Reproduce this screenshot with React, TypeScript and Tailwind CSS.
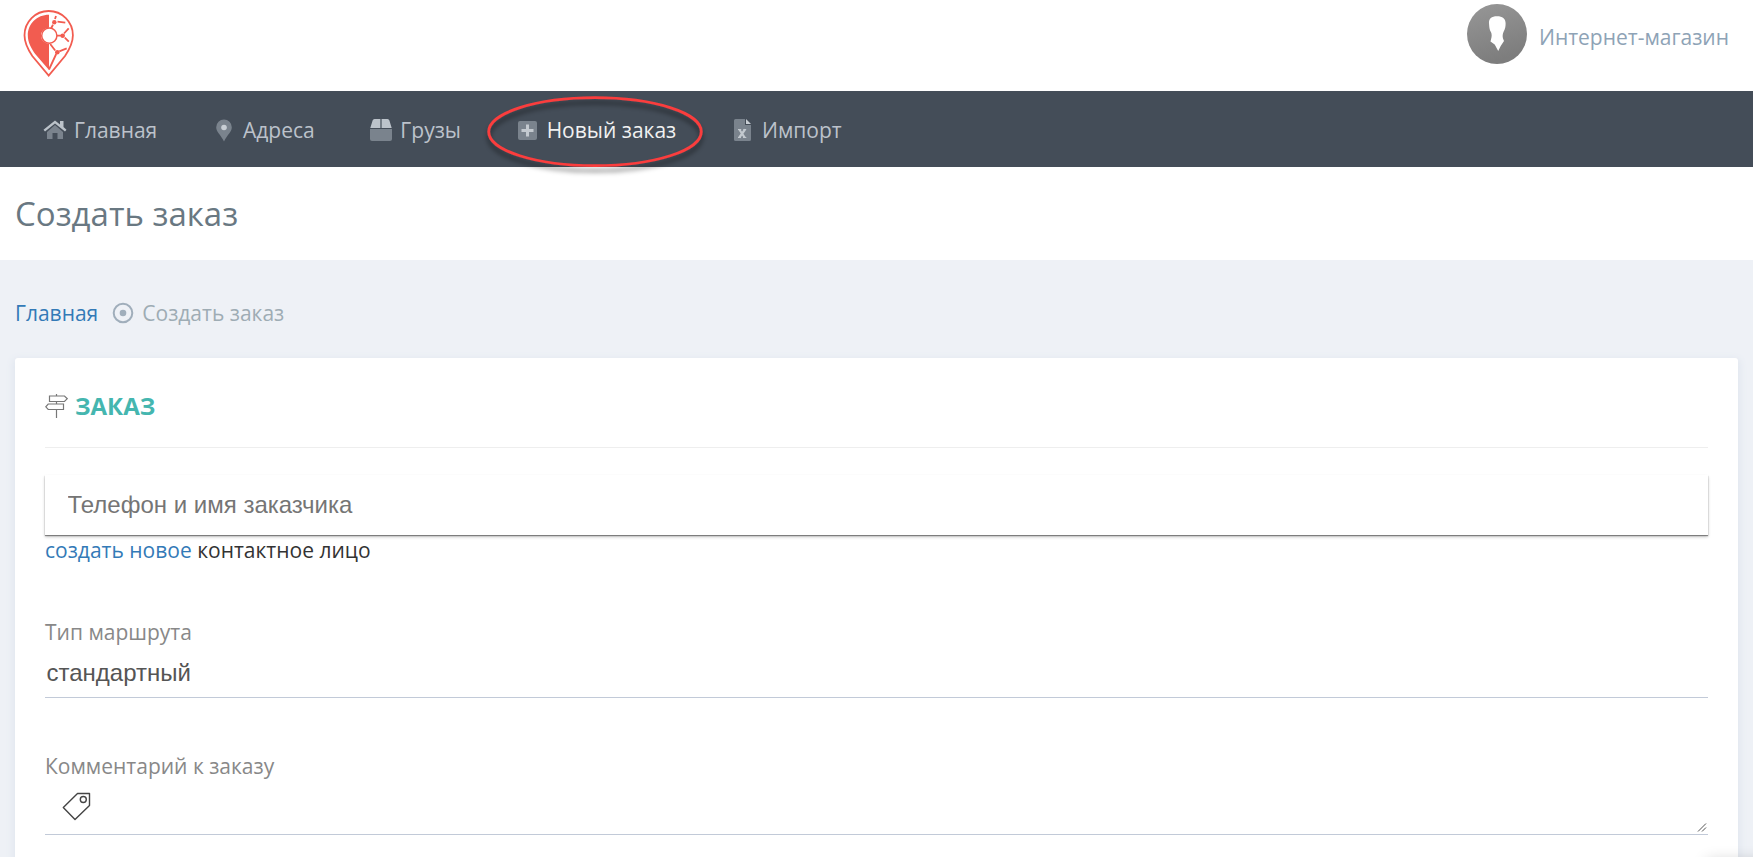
import type { ReactNode } from "react";

function Logo() {
  return (
    <svg width="52" height="68" viewBox="0 0 52 68" fill="none">
      <path
        d="M25.700 1C12.300 1 1.500 11.800 1.500 25.300c0 8 3.400 14.200 7.800 20.700L25.700 65.500 42 46c4.400-6.500 7.900-12.700 7.900-20.700C49.900 11.800 39.100 1 25.700 1Z"
        stroke="#f25c50"
        strokeWidth="1.800"
      />
      <path
        d="M26 4.800C13.800 4.800 4.800 14 4.800 25.300c0 7.500 3.600 13.200 7.400 18.700L26 60V33.700a8 8 0 0 1 0-16Z"
        fill="#f25c50"
      />
      <circle cx="26.300" cy="25.700" r="7.600" stroke="#f25c50" strokeWidth="1.500" fill="#fff" />
      <path
        d="M33 6l-1 3M34.500 11.600l7.800 1M30 14.800l-2 3.700M34 25.700h4M41 23.500l4.700-5.200M41.800 27.700l4 4M27.200 34l5 6.500M36.300 41.300l7.400-3M33.200 44L26 59.500"
        stroke="#f25c50"
        strokeWidth="1.800"
      />
      <g fill="#f25c50">
        <circle cx="31.300" cy="12.300" r="2.200" />
        <circle cx="39.700" cy="25.800" r="2.300" />
        <circle cx="34.300" cy="42.200" r="2.300" />
      </g>
    </svg>
  );
}

function HomeIcon() {
  return (
    <svg width="24" height="20" viewBox="0 0 24 20">
      <path d="M12 5l8 7v7h-5.500v-6h-5v6H4v-7Z" fill="#7a838d" />
      <path d="M17 1h3.500v6l3 2.800-1.500 1.800L12 3.500 2 11.600.5 9.800 12 .5l5 4Z" fill="#bcc3ca" />
    </svg>
  );
}

function PinIcon() {
  return (
    <svg width="16" height="23" viewBox="0 0 16 23">
      <path d="M8 .5a7.800 7.800 0 0 0-7.800 7.800C.2 13 4.500 15.500 8 22.500c3.500-7 7.800-9.500 7.800-14.200A7.800 7.800 0 0 0 8 .5Z" fill="#7a838d" />
      <circle cx="8" cy="8.500" r="2.800" fill="#c8ced4" />
    </svg>
  );
}

function BoxIcon() {
  return (
    <svg width="22" height="22" viewBox="0 0 22 22">
      <path d="M0 10h22v10a2 2 0 0 1-2 2H2a2 2 0 0 1-2-2Z" fill="#7a838d" />
      <path d="M10.400 0v9H.3L2.600 1.500A2 2 0 0 1 4.500 0ZM11.600 0v9h10.100l-2.300-7.500A2 2 0 0 0 17.500 0Z" fill="#bcc3ca" />
    </svg>
  );
}

function PlusIcon() {
  return (
    <svg width="19" height="19" viewBox="0 0 19 19">
      <rect width="19" height="19" rx="2" fill="#7a838d" />
      <path d="M8 3.500h3V8h4.500v3H11v4.500H8V11H3.500V8H8Z" fill="#c3c9cf" />
    </svg>
  );
}

function ExcelIcon() {
  return (
    <svg width="17" height="22" viewBox="0 0 17 22">
      <path d="M1.500 0H11v6h6v14.500a1.500 1.500 0 0 1-1.500 1.500h-14A1.500 1.500 0 0 1 0 20.500v-19A1.500 1.500 0 0 1 1.500 0Z" fill="#7a838d" />
      <path d="M12 0l5 5h-5Z" fill="#c8ced4" />
      <path d="M5.300 10.500l5.400 8M11 10.500l-5.700 8" stroke="#c3c9cf" strokeWidth="2.200" />
      <path d="M4 10.500h3.200M9.300 10.500h2.900M4 18.500h2.900M9 18.500h3.300" stroke="#c3c9cf" strokeWidth="1.200" />
    </svg>
  );
}

const navItems: { label: string; icon: ReactNode; active?: boolean }[] = [
  { label: "Главная", icon: <HomeIcon /> },
  { label: "Адреса", icon: <PinIcon /> },
  { label: "Грузы", icon: <BoxIcon /> },
  { label: "Новый заказ", icon: <PlusIcon />, active: true },
  { label: "Импорт", icon: <ExcelIcon /> },
];

export default function App() {
  return (
    <div className="h-[857px] flex flex-col overflow-hidden relative bg-[#eef1f6] text-[21px] leading-[30px] font-['Open_Sans',sans-serif]">
      {/* Top bar */}
      <header className="h-[91px] shrink-0 bg-white flex items-start justify-between pl-[23px] pr-6">
        <div className="pt-[10px]">
          <Logo />
        </div>
        <div className="flex items-center gap-3 pt-1">
          <svg width="60" height="60" viewBox="0 0 60 60">
            <defs>
              <linearGradient id="avatar" x1="0" y1="0" x2="0.3" y2="1">
                <stop offset="0" stopColor="#979797" />
                <stop offset="1" stopColor="#7d7d7d" />
              </linearGradient>
            </defs>
            <circle cx="30" cy="30" r="30" fill="url(#avatar)" />
            <path
              d="M30 12.200c-5.500 0-8.300 2.500-8 7 .2 3 .3 5 1.200 7.500 1.300 2 1.800 4 1.300 6.500l-1 4.300 4.200 3 3.500 6.500 2.500-5 3.300-5-1-2.500c-.6-2.500-.4-4.500.7-7 1.500-2.500 2-5.500 1.900-8.500-.2-4.500-3-6.800-8.600-6.800Z"
              fill="#fff"
            />
          </svg>
          <span className="text-[#8ea3b6] pt-[5px]">Интернет-магазин</span>
        </div>
      </header>

      {/* Main menu */}
      <nav className="h-[76px] shrink-0 bg-[#444d58] flex items-center gap-[53.700px] pl-[42px] pt-[2px]">
        {navItems.map((item) => (
          <a
            key={item.label}
            className={`flex items-center gap-[6px] whitespace-nowrap ${item.active ? "text-[#f1f1f1]" : "text-[#bcc2cb]"}`}
          >
            <span className="w-[26px] flex justify-center">{item.icon}</span>
            {item.label}
          </a>
        ))}
      </nav>

      {/* Marker around the new order item */}
      <svg className="absolute left-[475px] top-[86px] pointer-events-none" width="240" height="96">
        <defs>
          <filter id="marker-shadow" x="-10%" y="-20%" width="120%" height="150%">
            <feDropShadow dx="0" dy="5" stdDeviation="2.500" floodColor="#000" floodOpacity="0.5" />
          </filter>
        </defs>
        <ellipse cx="120" cy="45.700" rx="106.300" ry="34" fill="none" stroke="#fb3d3d" strokeWidth="2.800" filter="url(#marker-shadow)" />
      </svg>

      {/* Page title */}
      <div className="h-[93px] shrink-0 bg-white flex items-center px-[15px]">
        <h1 className="text-[33px] leading-[40px] text-[#697882]">Создать заказ</h1>
      </div>

      <main className="px-[15px] pt-[38px]">
        <div className="h-[30px] flex items-center text-[#9eacb4]">
          <a className="text-[#337ab7]">Главная</a>
          <svg className="ml-[14px] mr-[8px]" width="22" height="22" viewBox="0 0 22 22">
            <circle cx="11" cy="11" r="9.300" fill="none" stroke="#a0aebb" strokeWidth="2" />
            <circle cx="11" cy="11" r="3.300" fill="#a0aebb" />
          </svg>
          <span>Создать заказ</span>
        </div>

        <section className="mt-[30px] h-[520px] bg-white rounded-[3px] px-[30px] shadow-[0_3px_6px_3px_#e3e8f0]">
          <div className="h-[90px] pt-[33px] border-b border-[#eeeeee] flex items-start gap-[7px]">
            <svg className="mt-[3px]" width="23" height="24" viewBox="0 0 23 24" fill="none" stroke="#777" strokeWidth="1.200">
              <path d="M11.500 0v2M11.500 7.500v2.500M11.500 15.500V24M4.500 2h15l2.800 2.700-2.800 2.800h-15ZM18.500 10H3.200L.8 12.800l2.400 2.700h15.300Z" />
            </svg>
            <h2 className="font-bold text-[#45b6af] text-[24px] leading-[30px]">ЗАКАЗ</h2>
          </div>

          <input
            className="mt-[27px] block w-full h-[60px] px-[22.500px] bg-white text-[24px] font-['Liberation_Sans',sans-serif] placeholder:text-[#757575] outline-none shadow-[0_2px_3px_rgba(0,0,0,0.22),0_1px_1px_rgba(0,0,0,0.4)]"
            placeholder="Телефон и имя заказчика"
          />
          <p className="text-[#333]">
            <a className="text-[#337ab7]">создать новое</a> контактное лицо
          </p>

          <label className="block mt-[52px] text-[#888]">Тип маршрута</label>
          <div className="h-[51px] pt-[11px] pl-[1.500px] text-[24px] leading-[30px] text-[#555] border-b border-[#c2cad8] font-['Liberation_Sans',sans-serif]">
            стандартный
          </div>

          <label className="block mt-[53px] text-[#888]">Комментарий к заказу</label>
          <div className="h-[54px] border-b border-[#c2cad8] flex items-start justify-between">
            <svg className="ml-[17px] mt-[11px]" width="29" height="29" viewBox="0 0 29 29" fill="none" stroke="#444" strokeWidth="1.400" strokeLinejoin="round">
              <path d="M15.500 1.500H27.500V13.500L13 27.500 1.300 15.500Z" />
              <circle cx="21.300" cy="7.500" r="3" />
            </svg>
            <svg className="self-end mb-[2px]" width="11" height="9" viewBox="0 0 11 9" stroke="#555" strokeWidth="1">
              <path d="M1 8.500l8-8M5 8.500l4-4" />
            </svg>
          </div>
        </section>
      </main>

      {/* Edge of the floating chat panel */}
      <div className="absolute left-[1710px] top-[864px] w-[60px] h-[20px] shadow-[0_0_16px_3px_rgba(0,0,0,0.2)]" />
    </div>
  );
}
